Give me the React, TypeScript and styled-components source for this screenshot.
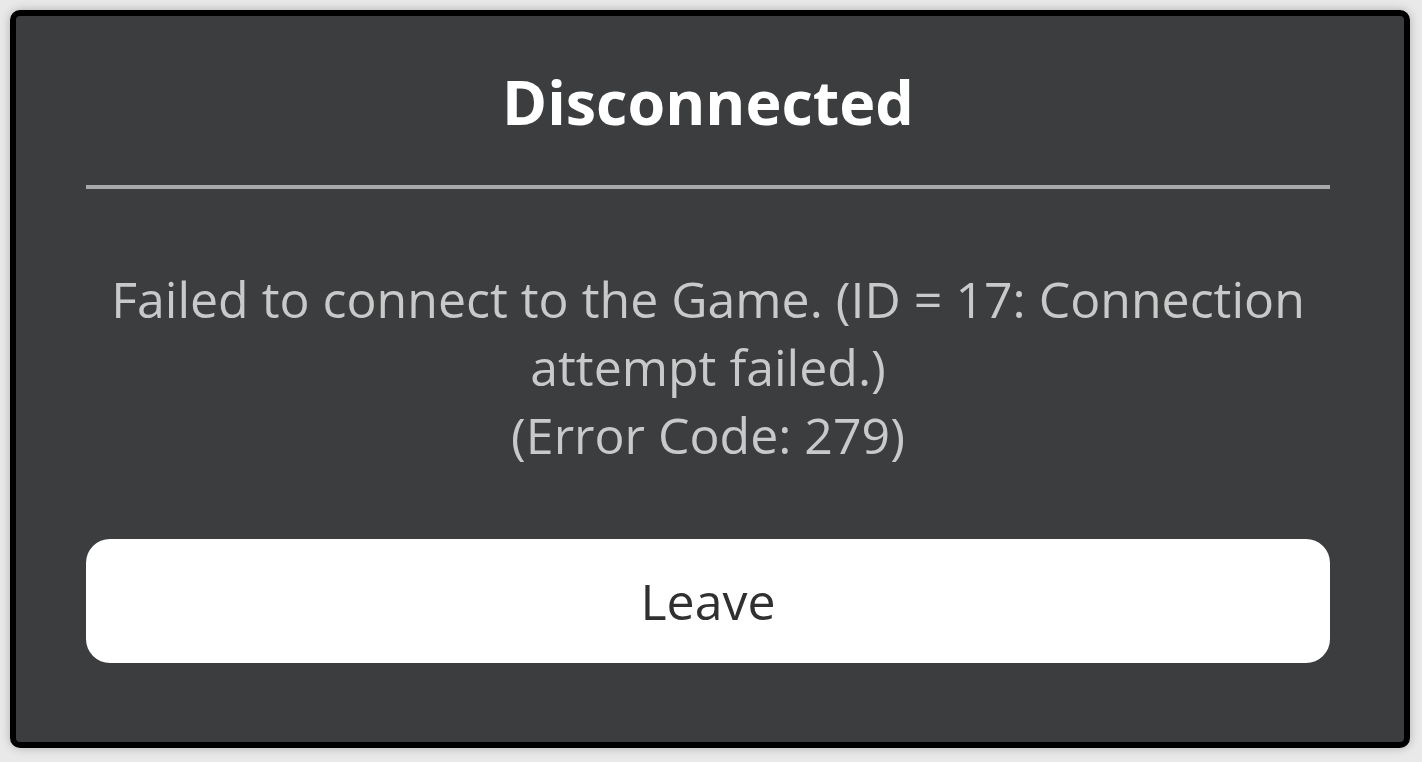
import React from "react";
import styled, { createGlobalStyle } from "styled-components";

const Global = createGlobalStyle`
  html, body { margin: 0; padding: 0; }
  body {
    background: #e9e9e9;
    font-family: "Open Sans", "Noto Sans", sans-serif;
  }
`;

const Page = styled.div`
  width: 1422px;
  height: 762px;
  box-sizing: border-box;
  padding: 10px 12px 14px 10px;
  display: flex;
`;

const Frame = styled.div`
  flex: 1;
  box-sizing: border-box;
  border: 6px solid #000;
  border-radius: 10px;
  background: #3c3d3f;
  box-shadow: 0 0 10px rgba(0, 0, 0, 0.25);
  display: flex;
  flex-direction: column;
  padding: 0 74px 0 70px;
`;

const Title = styled.h1`
  margin: 0;
  height: 169px;
  display: flex;
  align-items: center;
  justify-content: center;
  padding-top: 2px;
  box-sizing: border-box;
  font-size: 61px;
  font-weight: 700;
  color: #ffffff;
`;

const Divider = styled.div`
  height: 4px;
  background: #a9a9a9;
`;

const Message = styled.p`
  margin: 0;
  padding-top: 76px;
  height: 350px;
  box-sizing: border-box;
  text-align: center;
  font-size: 50px;
  line-height: 68px;
  color: #c9c9c9;
`;

const LeaveButton = styled.button`
  height: 124px;
  border: none;
  border-radius: 24px;
  background: #ffffff;
  color: #303030;
  font-family: "Open Sans", "Noto Sans", sans-serif;
  font-size: 50px;
  padding: 0 0 0 0;
  cursor: pointer;
`;

export default function App() {
  return (
    <>
      <Global />
      <Page>
        <Frame>
          <Title>Disconnected</Title>
          <Divider />
          <Message>
            Failed to connect to the Game. (ID = 17: Connection
            <br />
            attempt failed.)
            <br />
            (Error Code: 279)
          </Message>
          <LeaveButton>Leave</LeaveButton>
        </Frame>
      </Page>
    </>
  );
}
